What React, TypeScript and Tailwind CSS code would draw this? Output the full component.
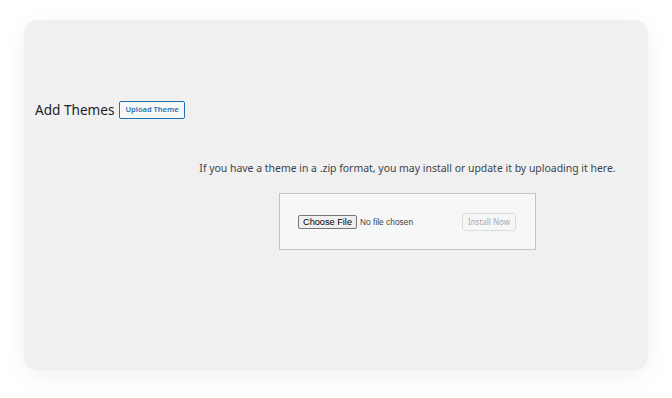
export default function App() {
    return (
        <div className="w-[672px] h-[398px] bg-white pt-[20px] pl-[24px] font-['Noto_Sans',sans-serif]">
            <div className="w-[624px] h-[350px] rounded-[14px] bg-[#f0f0f1] shadow-[0_6px_24px_rgba(0,0,0,0.06)] flex flex-col">
                {/* page title */}
                <div className="flex items-center gap-[5px] mt-[81px] ml-[11px]">
                    <h1 className="text-[13.6px] leading-[18px] text-[#1d2327]">Add Themes</h1>
                    <button className="h-[18px] px-[5px] border border-[#2271b1] rounded-[2px] bg-[#f6f7f7] text-[#2271b1] text-[7.5px] font-semibold leading-none">
                        Upload Theme
                    </button>
                </div>

                {/* upload section */}
                <div className="ml-[143px] w-[481px] flex flex-col items-center mt-[41px]">
                    <p className="text-[10.45px] leading-[16px] text-[#3c434a] whitespace-nowrap">
                        If you have a theme in a .zip format, you may install or update it by uploading it here.
                    </p>
                    <div className="mt-[17px] w-[257px] h-[57px] border border-[#c3c4c7] bg-[#f6f7f7] flex items-center justify-between pl-[18px] pr-[19px]">
                        <div className="flex items-center gap-[3px] font-['Liberation_Sans',Arial,sans-serif] mt-[1px]">
                            <span className="h-[14px] px-[4px] border border-[#767676] rounded-[2px] bg-[#efefef] text-[9.2px] leading-[12px] text-black">
                                Choose File
                            </span>
                            <span className="text-[8.4px] text-[#3c434a]">No file chosen</span>
                        </div>
                        <button className="w-[54px] h-[18px] mt-[1px] border border-[#dcdcde] rounded-[3px] bg-[#f6f7f7] text-[#a7aaad] text-[8px] leading-none">
                            Install Now
                        </button>
                    </div>
                </div>
            </div>
        </div>
    )
}
